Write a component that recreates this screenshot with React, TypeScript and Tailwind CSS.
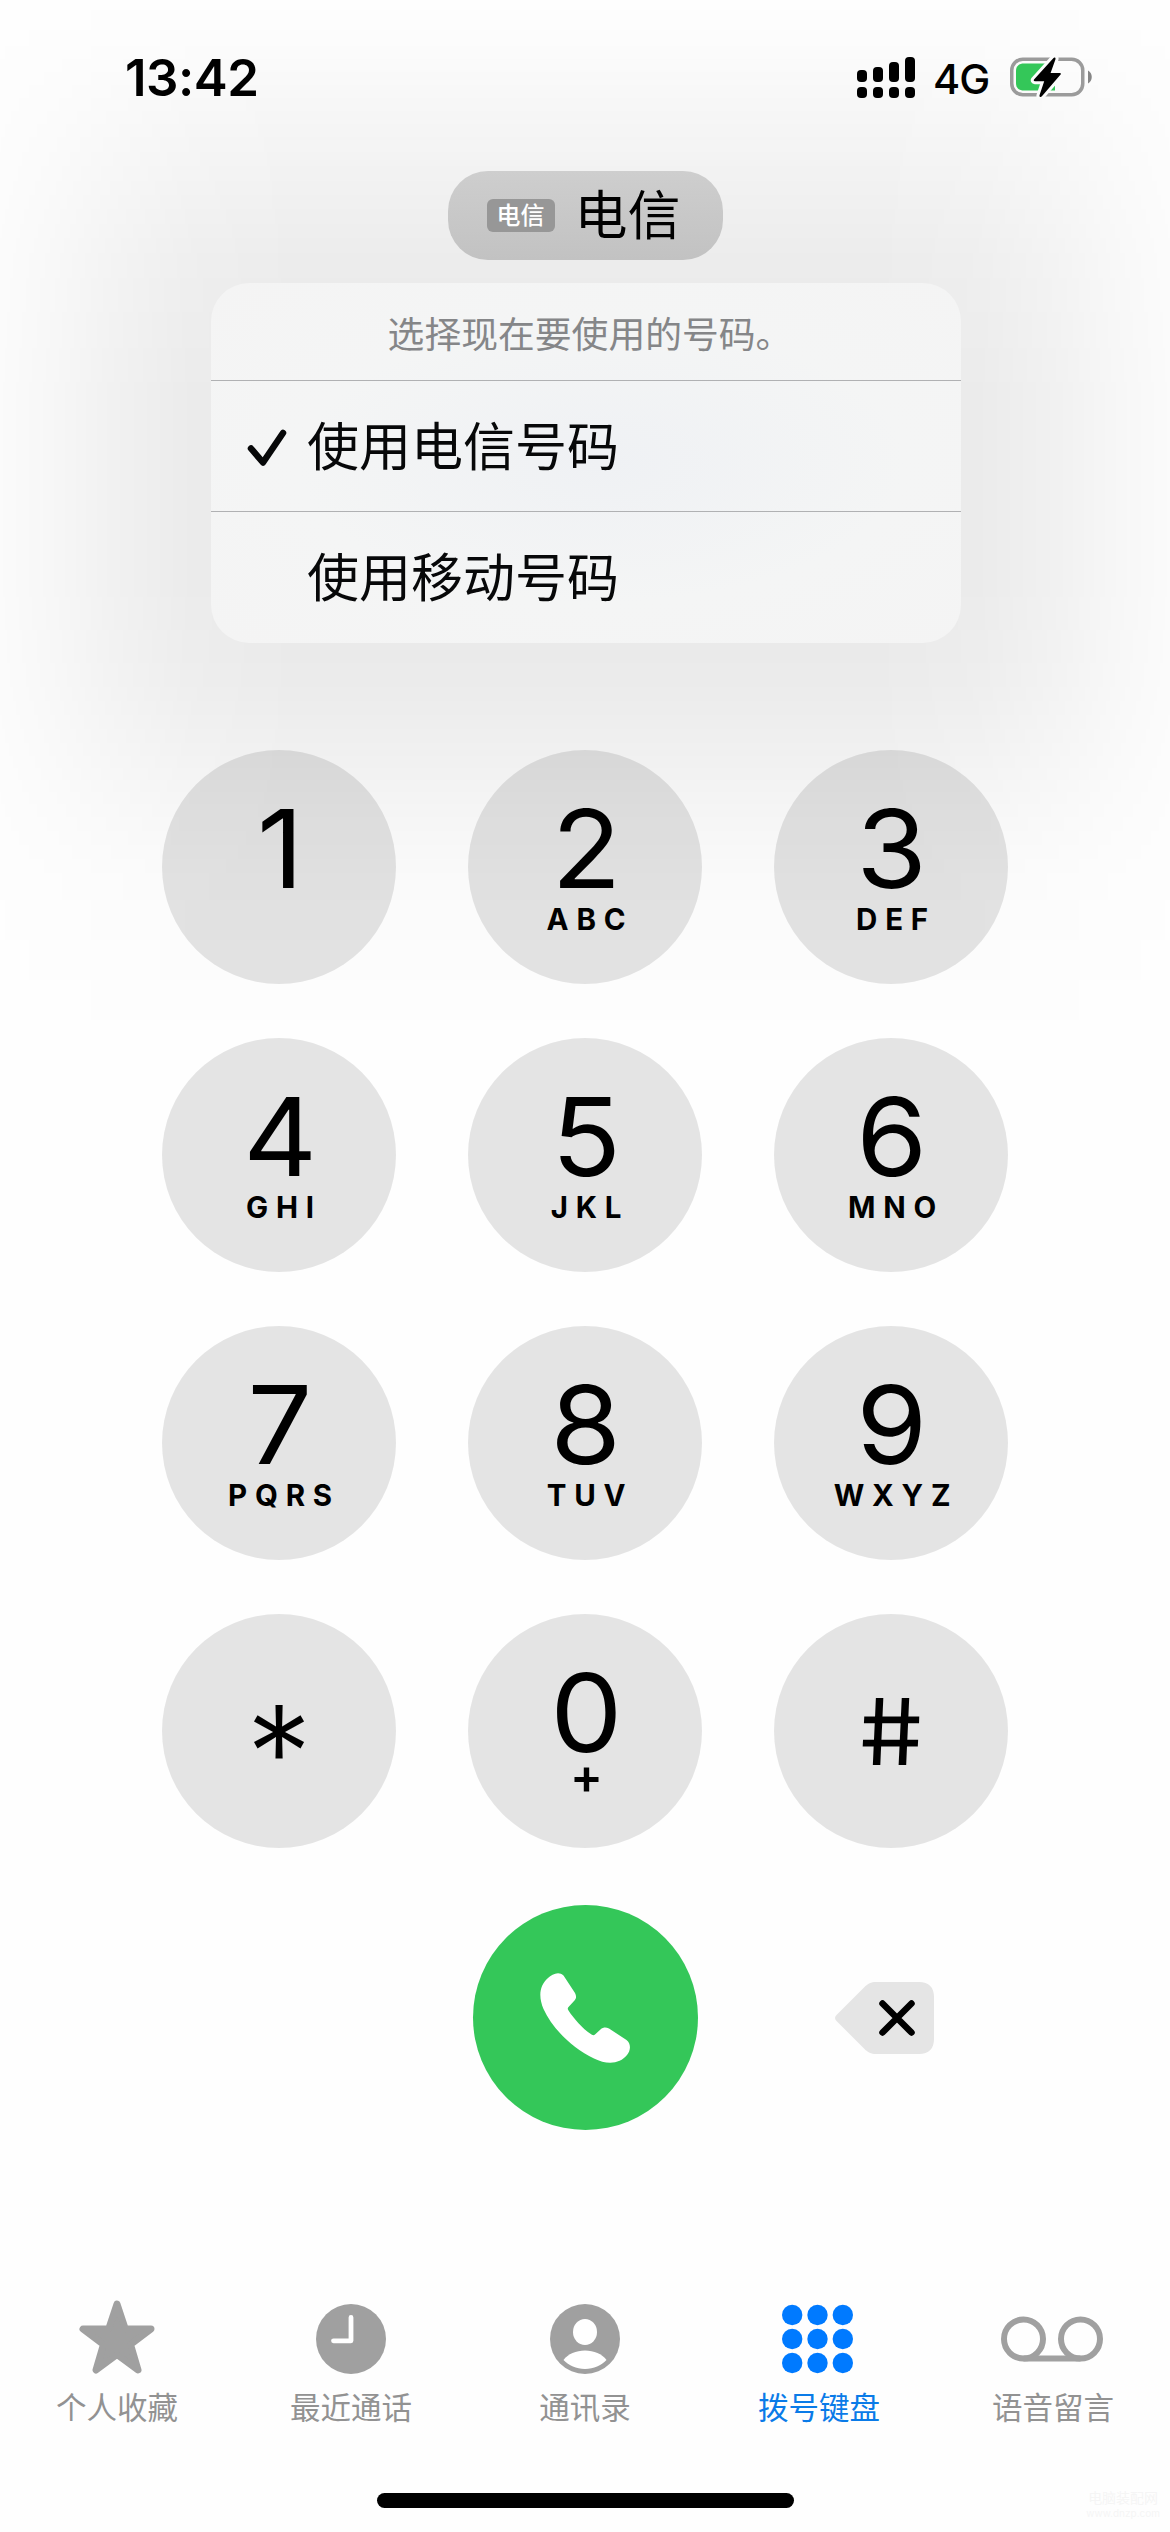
const KEYS = [
  { digit: '1', letters: '' },
  { digit: '2', letters: 'ABC' },
  { digit: '3', letters: 'DEF' },
  { digit: '4', letters: 'GHI' },
  { digit: '5', letters: 'JKL' },
  { digit: '6', letters: 'MNO' },
  { digit: '7', letters: 'PQRS' },
  { digit: '8', letters: 'TUV' },
  { digit: '9', letters: 'WXYZ' },
  { digit: '*', letters: '' },
  { digit: '0', letters: '+' },
  { digit: '#', letters: '' },
];

function SignalIcon() {
  const tops = [13, 10, 5, 0];
  return (
    <svg width="58" height="41" viewBox="0 0 58 41">
      {tops.map((top, i) => (
        <g key={top}>
          <rect x={i * 16} y={top} width="10" height={25 - top} rx="4" />
          <rect x={i * 16} y="30" width="10" height="11" rx="4" />
        </g>
      ))}
    </svg>
  );
}

function BatteryIcon() {
  const bolt = 'M43.3 1.2 24 22.6c-.6.8-.2 1.6.8 1.6h9.4L29.6 38c-.6 1.9 1 2.7 2.3 1.2L50.6 17.6c.6-.8.3-1.6-.8-1.6h-9.2l4.8-13.6c.6-1.8-.9-2.5-2.1-1.2Z';
  return (
    <svg width="83" height="41" viewBox="0 0 83 41">
      <rect x="1.75" y="2.25" width="71" height="35.5" rx="11" fill="none" stroke="#9b9b9b" strokeWidth="3.5" />
      <path d="M6 14c0-5 3-7.5 8-7.5h31v27H14c-5 0-8-2.5-8-7.5Z" fill="#34c759" />
      <path d="M78 13.5c5 2.500 5 10.500 0 13Z" fill="#858585" />
      <path d={bolt} stroke="#fcfcfc" strokeWidth="6" />
      <path d={bolt} />
    </svg>
  );
}

function StatusBar() {
  return (
    <header className="flex h-[171px] items-start justify-between pl-[125px] pr-[77px] pt-[57px]">
      <span className="mt-[-9px] text-[51px] font-semibold leading-[60px] tracking-[-0.5px]">13:42</span>
      <div className="flex items-start">
        <SignalIcon />
        <span className="ml-[18px] mt-[-3px] w-[57px] whitespace-nowrap text-[41.5px] font-medium leading-[50px] tracking-[-1px]">4G</span>
        <div className="ml-[20px]">
          <BatteryIcon />
        </div>
      </div>
    </header>
  );
}

function LineMenu() {
  return (
    <div className="ml-[2px] mt-[23px] h-[360px] w-[750px] overflow-hidden rounded-[38px] bg-[#f4f4f4] bg-[radial-gradient(ellipse_at_52%_50%,#eff1f4_0%,#f4f5f5_55%,#f4f4f4_100%)] text-[#070809]">
      <div className="flex h-[97px] items-center justify-center pl-[8px] pt-[6px] text-[36.8px] text-[#858688]">选择现在要使用的号码。</div>
      <div className="flex h-[131px] items-center border-t-[1.5px] border-[#b0b1b3] pl-[96px] pt-[3px] text-[52px]">
        <svg width="42" height="42" viewBox="0 0 42 42" className="ml-[-61px] mr-[19px]" fill="none" stroke="currentColor" strokeWidth="6.5" strokeLinecap="round" strokeLinejoin="round">
          <path d="M5 21.500 17 35.500 37 6" />
        </svg>
        使用电信号码
      </div>
      <div className="flex h-[132px] items-center border-t-[1.5px] border-[#b0b1b3] pl-[96px] pt-[3px] text-[52px]">使用移动号码</div>
    </div>
  );
}

function Key({ digit, letters }: { digit: string; letters: string }) {
  const symbol = digit === '*' || digit === '#';
  return (
    <button className="flex size-[234px] flex-col items-center rounded-full bg-black/10">
      {symbol ? (
        <span
          className={
            digit === '*'
              ? 'mt-[85px] text-[131px] font-light leading-[108px]'
              : 'mt-[64px] scale-x-[1.1] skew-x-[7deg] text-[92px] leading-[108px]'
          }
        >
          {digit}
        </span>
      ) : (
        <>
          <span className="mt-[44px] scale-x-[1.05] pl-[2px] text-[109px] leading-[108px]">{digit}</span>
          <span
            className={
              letters === '+'
                ? 'mt-[-14px] pl-[3px] text-[49px] font-semibold leading-[50px]'
                : 'mt-[-1px] pl-[10px] text-[29.5px] font-bold leading-[36px] tracking-[7.8px]'
            }
          >
            {letters}
          </span>
        </>
      )}
    </button>
  );
}

function StarIcon() {
  return (
    <svg width="76" height="74" viewBox="0 0 76 74" className="mb-[5px]" fill="#a0a0a0" stroke="#a0a0a0" strokeWidth="7" strokeLinejoin="round">
      <path d="M38 4 46.300 29H72L51.500 44.500 59 70 38 54.500 17 70l7.500-25.500L4 29h25.700Z" />
    </svg>
  );
}

function ClockIcon() {
  return (
    <svg width="70" height="70" viewBox="0 0 70 70" fill="none">
      <circle cx="35" cy="35" r="35" fill="#a0a0a0" />
      <path d="M35 13.500v23.300H17.500" stroke="#fff" strokeWidth="4.800" strokeLinecap="round" strokeLinejoin="round" />
    </svg>
  );
}

function ContactIcon() {
  return (
    <svg width="70" height="70" viewBox="0 0 70 70">
      <circle cx="35" cy="35" r="35" fill="#a0a0a0" />
      <ellipse cx="35" cy="28" rx="12" ry="13" fill="#fff" />
      <path d="M13.500 56C18 50 26 46.500 35 46.500S52 50 56.500 56C51 61.500 44 65 35 65s-16-3.500-21.500-9Z" fill="#fff" />
    </svg>
  );
}

function KeypadIcon() {
  const steps = [10.2, 35.5, 60.8];
  return (
    <svg width="71" height="70" viewBox="0 0 71 70" className="mr-[3px]" fill="#007aff">
      {steps.map((y) => steps.map((x) => <circle key={`${x}-${y}`} cx={x} cy={y * 0.95 + 1.3} r="10.2" />))}
    </svg>
  );
}

function VoicemailIcon() {
  return (
    <svg width="102" height="46" viewBox="0 0 102 46" className="mr-[3px]" fill="none" stroke="#a0a0a0" strokeWidth="6">
      <circle cx="22.500" cy="23" r="19.500" />
      <circle cx="79.500" cy="23" r="19.500" />
      <path d="M22.500 42.500h57" />
    </svg>
  );
}

const TABS = [
  { label: '个人收藏', icon: <StarIcon />, active: false },
  { label: '最近通话', icon: <ClockIcon />, active: false },
  { label: '通讯录', icon: <ContactIcon />, active: false },
  { label: '拨号键盘', icon: <KeypadIcon />, active: true },
  { label: '语音留言', icon: <VoicemailIcon />, active: false },
];

export default function App() {
  return (
    <div className="relative isolate flex h-[2532px] w-[1170px] flex-col overflow-hidden bg-[#fefefe] font-['Inter','Noto_Sans_CJK_SC',sans-serif] text-black">
      <div className="absolute inset-x-0 top-0 -z-10 h-[1040px] [background:linear-gradient(to_bottom,rgba(0,0,0,0)_0px,rgba(0,0,0,0.007)_40px,rgba(0,0,0,0.035)_130px,rgba(0,0,0,0.07)_260px,rgba(0,0,0,0.085)_400px,rgba(0,0,0,0.085)_580px,rgba(0,0,0,0.075)_680px,rgba(0,0,0,0.055)_750px,rgba(0,0,0,0.035)_810px,rgba(0,0,0,0.014)_880px,rgba(0,0,0,0.006)_960px,rgba(0,0,0,0)_1040px)] [mask-image:linear-gradient(to_right,rgba(0,0,0,0.15)_0px,rgba(0,0,0,0.32)_50px,rgba(0,0,0,0.58)_110px,rgba(0,0,0,0.85)_190px,rgba(0,0,0,1)_300px,rgba(0,0,0,1)_870px,rgba(0,0,0,0.85)_980px,rgba(0,0,0,0.58)_1060px,rgba(0,0,0,0.32)_1120px,rgba(0,0,0,0.15)_1170px)]" />
      <StatusBar />
      <main className="flex flex-col items-center">
        <button className="flex h-[89px] w-[275px] items-center rounded-[40px] bg-linear-to-b from-[#cecece] to-[#c2c2c2] pl-[39px]">
          <span className="flex h-[33px] w-[68px] items-center justify-center rounded-[6px] bg-[#979797] text-[24px] font-medium leading-[33px] text-white">电信</span>
          <span className="ml-[20px] text-[53px] leading-[80px]">电信</span>
        </button>
        <LineMenu />
        <div className="mt-[107px] grid grid-cols-3 gap-x-[72px] gap-y-[54px]">
          {KEYS.map((key) => (
            <Key key={key.digit} {...key} />
          ))}
        </div>
        <div className="mt-[57px] grid w-[846px] grid-cols-3 items-center justify-items-center gap-x-[72px]">
          <button className="col-start-2 flex size-[225px] items-center justify-center rounded-full bg-[#34c759]">
            <svg width="90" height="90" viewBox="0 0 90 90" fill="#fff">
              <path d="M8 5C12 1 19-2 23.500 2.500L35 20c1.500 3 1.500 5-.5 7.500L28.500 34c-1 1.200-1 2 0 3.500C34 46 43 56 51.500 61.500c1.500 1 2.500 1 3.500 0l6-5.500c2.500-2 5-2 8-.5L86.500 67c5 4 4 11 .5 15-7 9-20 10-33 3.500C32 75 12 55 3.500 36-1.500 24-1 13 8 5Z" />
            </svg>
          </button>
          <button className="flex w-full justify-start pl-[61px]">
            <svg width="100" height="72" viewBox="0 0 100 72">
              <path d="M1.500 33 29 5.500C33 1.500 36 0 41 0h43c10 0 15 5.500 15 15v42c0 9.500-5 15-15 15H41c-5 0-8-1.500-12-5.500L1.500 39c-2-2-2-4 0-6Z" fill="#e5e5e5" />
              <path d="M47.500 21.500 76.500 50.500M76.500 21.500 47.500 50.500" stroke="#000" strokeWidth="6.500" strokeLinecap="round" />
            </svg>
          </button>
        </div>
      </main>
      <nav className="mt-[169px] grid grid-cols-5">
        {TABS.map((tab) => (
          <div key={tab.label} className={tab.active ? 'flex flex-col items-center text-[#0a7be8]' : 'flex flex-col items-center text-[#929292]'}>
            <div className="flex h-[80px] items-center justify-center">{tab.icon}</div>
            <span className="mt-[7px] text-[30.5px] leading-[44px]">{tab.label}</span>
          </div>
        ))}
      </nav>
      <div className="mt-[63px] h-[15px] w-[417px] self-center rounded-full bg-black" />
      <div className="absolute bottom-[12px] right-[10px] text-center text-[#f5f5f5]">
        <div className="text-[14px] leading-[17px]">电脑装配网</div>
        <div className="text-[10px] leading-[14px]">www.dnzp.com</div>
      </div>
    </div>
  );
}
